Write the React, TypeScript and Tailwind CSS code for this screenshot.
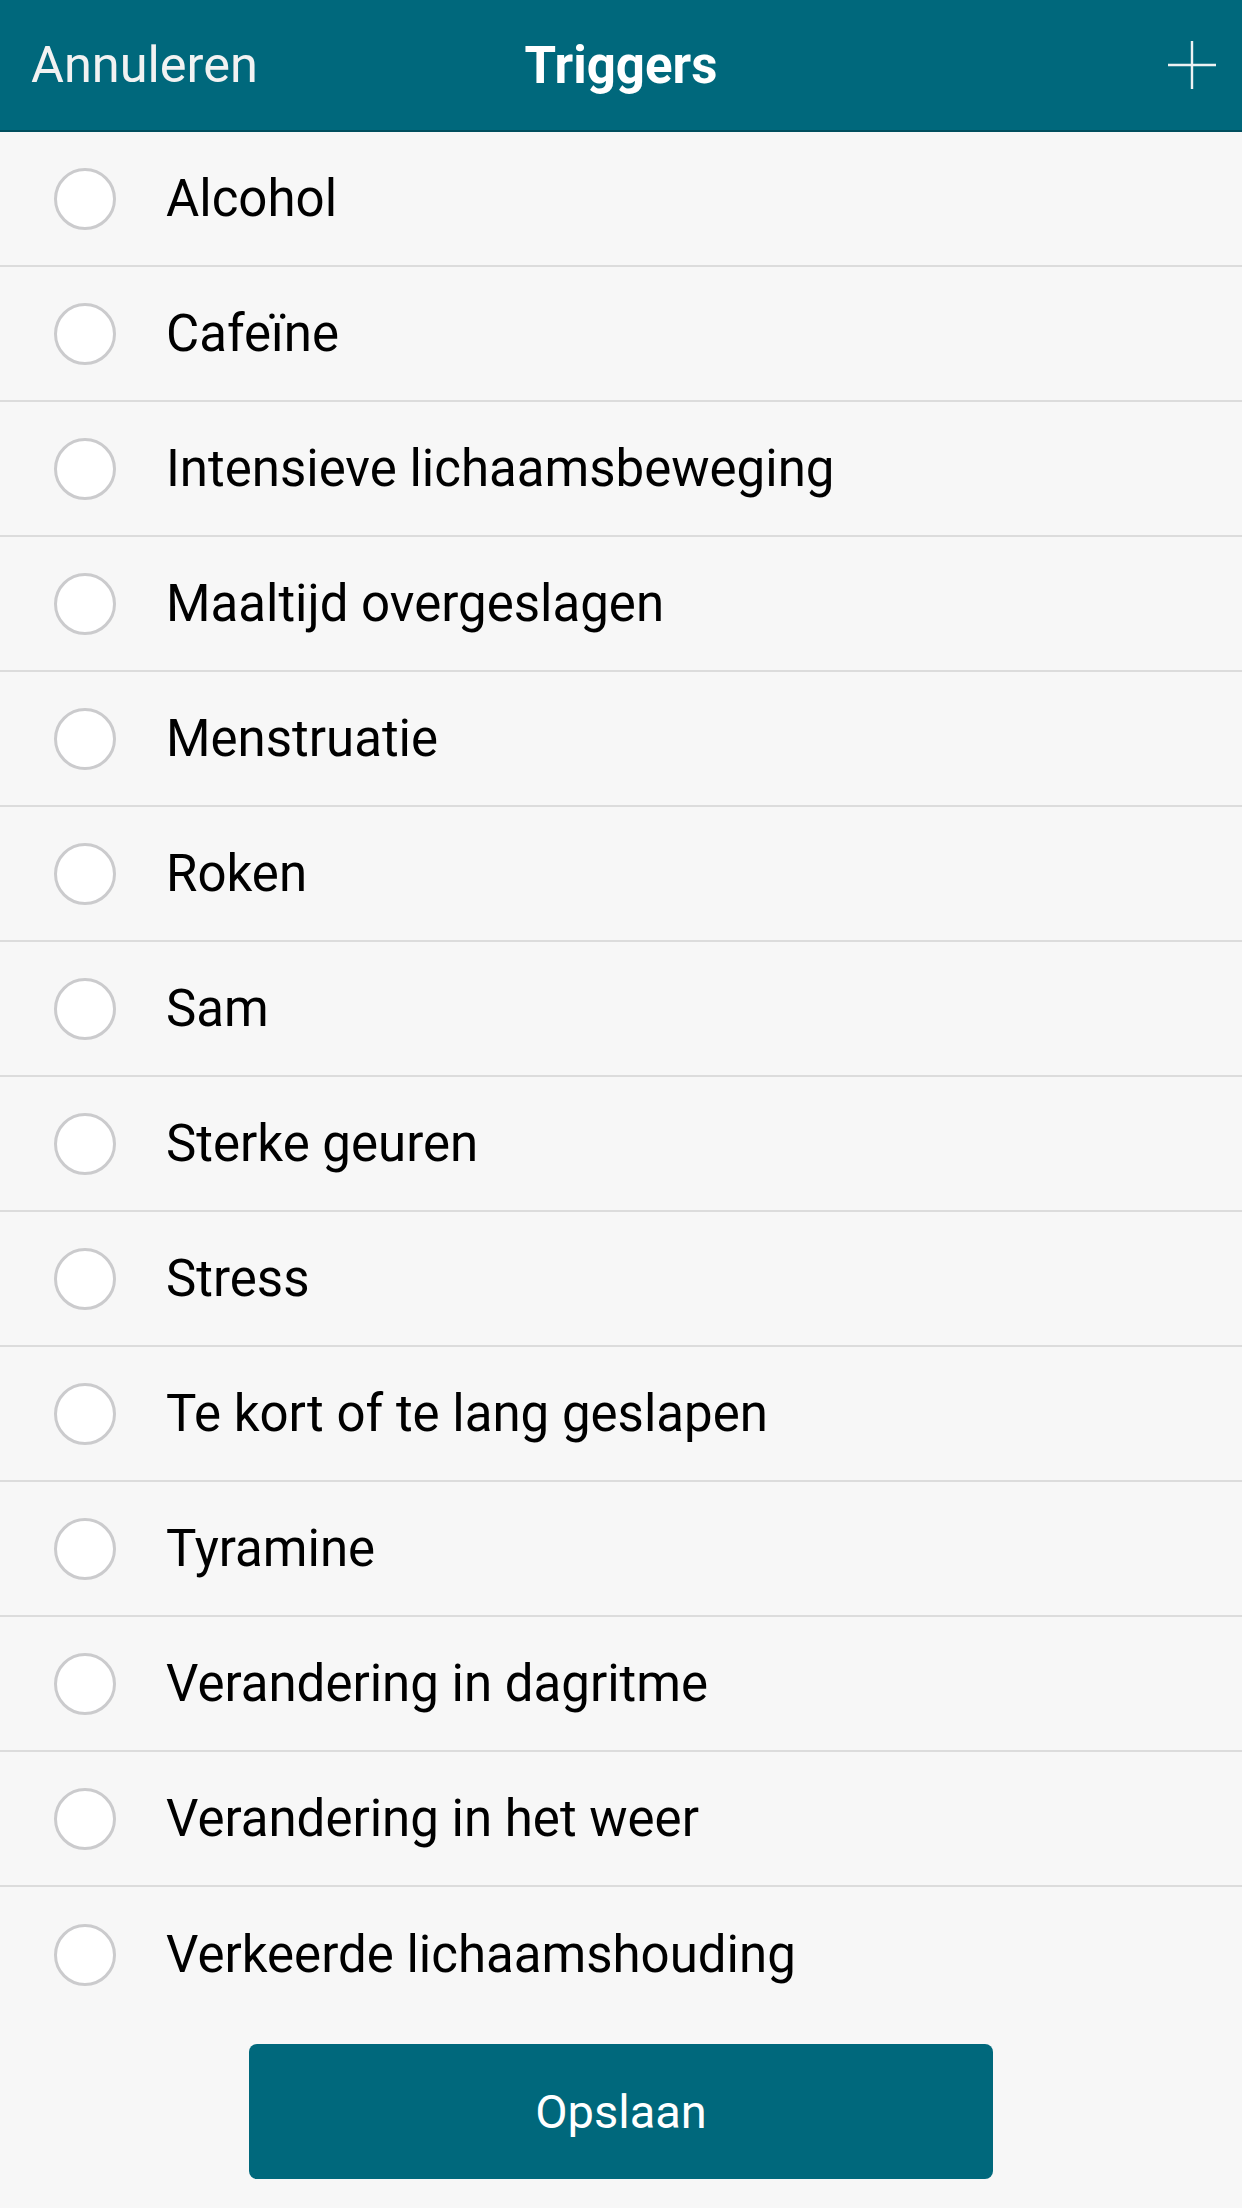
import React from "react";

const items = [
  "Alcohol",
  "Cafeïne",
  "Intensieve lichaamsbeweging",
  "Maaltijd overgeslagen",
  "Menstruatie",
  "Roken",
  "Sam",
  "Sterke geuren",
  "Stress",
  "Te kort of te lang geslapen",
  "Tyramine",
  "Verandering in dagritme",
  "Verandering in het weer",
  "Verkeerde lichaamshouding",
];

export default function App() {
  return (
    <div
      className="w-[1242px] h-[2208px] bg-[#f7f7f7] flex flex-col overflow-hidden"
      style={{ fontFamily: "Roboto, 'Noto Sans', sans-serif" }}
    >
      <header className="h-[132px] shrink-0 bg-[#00687c] border-b-2 border-[#004f5e] flex items-center px-[31px] relative">
        <span className="text-[50.5px] text-[#f2f2f2] leading-none">Annuleren</span>
        <span className="absolute left-1/2 -translate-x-1/2 text-[51px] font-bold text-white leading-none">
          Triggers
        </span>
        <svg
          className="ml-auto mr-[-6px]"
          width="50"
          height="50"
          viewBox="0 0 50 50"
        >
          <path d="M25 1 V49 M1 25 H49" stroke="#eef2f3" strokeWidth="2.4" />
        </svg>
      </header>
      <ul className="flex flex-col">
        {items.map((t, i) => (
          <li
            key={t}
            className={
              "h-[135px] flex items-center " +
              (i < items.length - 1 ? "border-b-2 border-[#dcdcdc]" : "")
            }
          >
            <span className="ml-[54px] w-[62px] h-[62px] rounded-full bg-white border-[3px] border-[#cbcbcd] shrink-0" />
            <span className="ml-[50px] text-[51px] text-black leading-none">{t}</span>
          </li>
        ))}
      </ul>
      <div className="flex justify-center mt-[22px]">
        <button className="w-[744px] h-[135px] rounded-[8px] bg-[#00687c] text-white text-[47px] leading-none">
          Opslaan
        </button>
      </div>
    </div>
  );
}
